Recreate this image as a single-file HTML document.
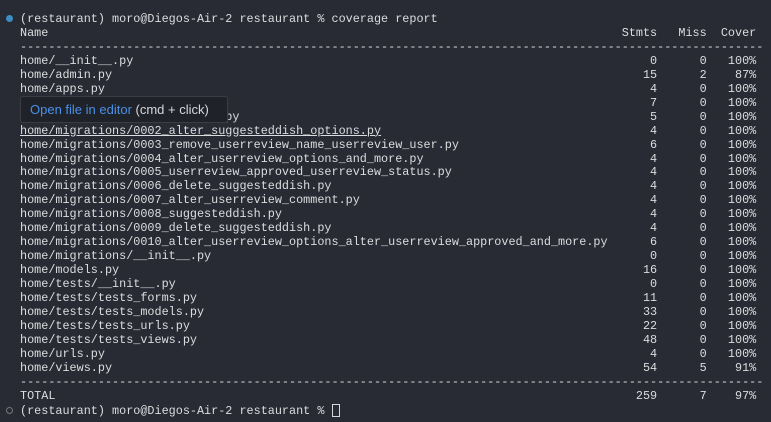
<!DOCTYPE html>
<html><head><style>
html,body{margin:0;padding:0;background:#282b34;width:771px;height:422px;overflow:hidden}
pre{position:absolute;left:20px;top:13px;margin:0;font-family:"Liberation Mono",monospace;font-size:11.8px;line-height:13.96px;color:#dcdddf}
.dot{position:absolute;left:6px;top:15px;width:7px;height:7px;border-radius:50%;background:#3b8fc4}
.odot{position:absolute;left:6px;top:407px;width:5px;height:5px;border-radius:50%;border:1px solid #777}
.tip{position:absolute;left:20px;top:96px;width:206px;height:25px;background:#1f2228;border:1px solid #3a3d45;border-radius:3px;font-family:"Liberation Sans",sans-serif;font-size:13px;line-height:25px;color:#d6d7d9;box-sizing:content-box}
.tip span{color:#4a90e8}
.tip div{padding-left:9px}
u{text-decoration:underline}
.cur{display:inline-block;width:8px;height:13px;border:1px solid #d6d7d9;vertical-align:-3px;box-sizing:border-box}
</style></head><body>
<div class="dot"></div>
<div class="odot"></div>
<pre>(restaurant) moro@Diegos-Air-2 restaurant % coverage report
Name                                                                                 Stmts   Miss  Cover
---------------------------------------------------------------------------------------------------------
home/__init__.py                                                                         0      0   100%
home/admin.py                                                                           15      2    87%
home/apps.py                                                                             4      0   100%
home/forms.py                                                                            7      0   100%
home/migrations/0001_initial.py                                                          5      0   100%
<u>home/migrations/0002_alter_suggesteddish_options.py</u>                                      4      0   100%
home/migrations/0003_remove_userreview_name_userreview_user.py                           6      0   100%
home/migrations/0004_alter_userreview_options_and_more.py                                4      0   100%
home/migrations/0005_userreview_approved_userreview_status.py                            4      0   100%
home/migrations/0006_delete_suggesteddish.py                                             4      0   100%
home/migrations/0007_alter_userreview_comment.py                                         4      0   100%
home/migrations/0008_suggesteddish.py                                                    4      0   100%
home/migrations/0009_delete_suggesteddish.py                                             4      0   100%
home/migrations/0010_alter_userreview_options_alter_userreview_approved_and_more.py      6      0   100%
home/migrations/__init__.py                                                              0      0   100%
home/models.py                                                                          16      0   100%
home/tests/__init__.py                                                                   0      0   100%
home/tests/tests_forms.py                                                               11      0   100%
home/tests/tests_models.py                                                              33      0   100%
home/tests/tests_urls.py                                                                22      0   100%
home/tests/tests_views.py                                                               48      0   100%
home/urls.py                                                                             4      0   100%
home/views.py                                                                           54      5    91%
---------------------------------------------------------------------------------------------------------
TOTAL                                                                                  259      7    97%
(restaurant) moro@Diegos-Air-2 restaurant % <span class="cur"></span></pre>
<div class="tip"><div><span>Open file in editor</span> (cmd + click)</div></div>
</body></html>
